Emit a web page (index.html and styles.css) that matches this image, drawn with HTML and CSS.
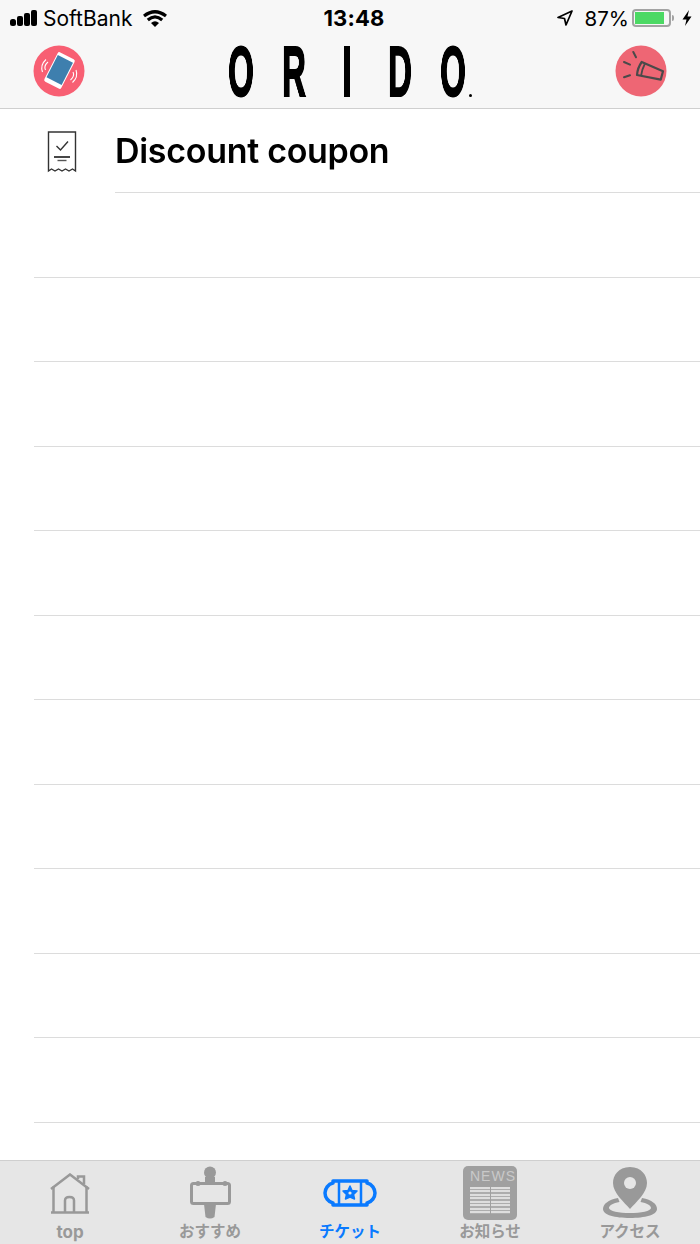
FILE: index.html
```html
<!DOCTYPE html>
<html lang="en">
<head>
    <meta charset="UTF-8">
    <title>ORIDO</title>
    <link rel="stylesheet" href="styles.css">
</head>
<body>
<div class="page">
    <div class="header">
        <div class="status">
            <div class="status-left">
                <svg class="signal" width="27" height="16" viewBox="0 0 27 16"><rect x="0" y="9" width="6" height="7" rx="2.500"/><rect x="7" y="6" width="6" height="10" rx="2"/><rect x="14" y="3" width="6" height="13" rx="2"/><rect x="21" y="0" width="6" height="16" rx="2"/></svg>
                <span>SoftBank</span>
                <svg class="wifi" width="24" height="17" viewBox="0 0 24 17"><path d="M1 6 Q12 -2.500 23 6" fill="none" stroke="#000" stroke-width="3.200"/><path d="M4.800 10 Q12 3.800 19.200 10" fill="none" stroke="#000" stroke-width="3.200"/><path d="M8 13 Q12 9.500 16 13 L12 17 Z"/></svg>
            </div>
            <div class="status-time">13:48</div>
            <div class="status-right">
                <svg width="16" height="16" viewBox="0 0 16 16"><path d="M15 1 L1 7.500 L7.500 8.500 L9 15 Z" fill="none" stroke="#000" stroke-width="1.700" stroke-linejoin="round"/></svg>
                <span class="percent">87%</span>
                <div class="battery"><div class="battery-fill"></div></div>
                <svg class="bolt" width="10" height="16" viewBox="0 0 10 16"><path d="M7 0 L0.500 9.500 L4.500 9.500 L3 16 L9.500 6.500 L5.500 6.500 Z"/></svg>
            </div>
        </div>
        <div class="nav">
            <svg class="nav-icon" width="52" height="52" viewBox="0 0 52 52">
                <circle cx="26" cy="26" r="25.500" fill="#f85f73"/>
                <g transform="rotate(27 26.500 25.500)">
                    <rect x="17" y="9" width="19" height="33" rx="2" fill="#fff"/>
                    <rect x="18" y="12.500" width="17" height="25" fill="#3e7fae"/>
                </g>
                <path d="M9.500 27 Q7 20 13 14.500 M12.500 25 Q10.500 21 15 17" fill="none" stroke="#fff" stroke-width="1.100"/>
                <path d="M43 25 Q45.500 32 39.500 37.500 M40 27 Q42 31 37.500 35" fill="none" stroke="#fff" stroke-width="1.100"/>
            </svg>
            <div class="logo"><span>O</span><span>R</span><span>I</span><span>D</span><span>O</span><i class="logo-dot"></i></div>
            <svg class="nav-icon" width="52" height="52" viewBox="0 0 52 52">
                <circle cx="26" cy="26" r="25.500" fill="#ee6674"/>
                <path d="M26.700 17 L48 26.300 L45.700 34.700 L22 30 Q22.500 23 26.700 17 Z" fill="none" stroke="#4a4a4a" stroke-width="2.200" stroke-linejoin="round"/>
                <path d="M30 18.500 Q27 24 26 31" fill="none" stroke="#4a4a4a" stroke-width="1.800"/>
                <path d="M18.300 7 L21 12.300 M9 17 L15 19.700 M9 32.300 L15 30.300" fill="none" stroke="#4a4a4a" stroke-width="2" stroke-linecap="round"/>
            </svg>
        </div>
    </div>
    <div class="list">
        <div class="row row-first">
            <svg class="row-icon" width="30" height="42" viewBox="0 0 30 42">
                <path d="M1.500 40 V1 H28.500 V40 L25.500 38 L22 40 L18.500 38 L15 40 L11.500 38 L8 40 L4.500 38 Z" fill="none" stroke="#333" stroke-width="1.400"/>
                <path d="M9.500 15 L13.500 19 L21 10.500" fill="none" stroke="#333" stroke-width="1.400"/>
                <path d="M7 26 H23" stroke="#333" stroke-width="1.800"/>
                <path d="M10.500 29.500 H19.500" stroke="#555" stroke-width="1.400"/>
            </svg>
            <div class="row-title">Discount coupon</div>
        </div>
        <div class="row"></div>
        <div class="row"></div>
        <div class="row"></div>
        <div class="row"></div>
        <div class="row"></div>
        <div class="row"></div>
        <div class="row"></div>
        <div class="row"></div>
        <div class="row"></div>
        <div class="row"></div>
        <div class="row"></div>
    </div>
    <div class="tabs">
        <div class="tab">
            <svg class="tab-home" width="42" height="42" viewBox="0 0 42 42" fill="none" stroke="#999" stroke-width="2.500"><path d="M2 16 L21 1.500 L40 16"/><path d="M29 6 V3.500 H35 V11"/><path d="M4.500 13.500 V39 M37.500 13.500 V39 M2 39.500 H40" /><path d="M16 39 V27.500 Q16 24 20.500 24 Q25 24 25 27.500 V39"/></svg>
            <span class="tab-label">top</span>
        </div>
        <div class="tab">
            <svg class="tab-sign" width="44" height="54" viewBox="0 0 44 54"><circle cx="22" cy="6.500" r="6" fill="#999"/><path d="M17 11 H27 V18 H17 Z M16 38 H28 L26.500 51 Q22 54 17.500 51 Z" fill="#999"/><circle cx="10" cy="17.500" r="2.500" fill="#999"/><circle cx="37" cy="17.500" r="2.500" fill="#999"/><rect x="3.500" y="17.500" width="38" height="20" rx="2" fill="none" stroke="#999" stroke-width="3"/></svg>
            <span class="tab-label">おすすめ</span>
        </div>
        <div class="tab tab-active">
            <svg class="tab-ticket" width="54" height="28" viewBox="0 0 54 28" fill="none" stroke="#0a7aff" stroke-width="3.500"><path d="M10 2 H44 V4 C49 5 52 10 52 14 C52 18 49 23 44 24 V26 H10 V24 C5 23 2 18 2 14 C2 10 5 5 10 4 Z" stroke-linejoin="round"/><path d="M16 3 V25 M38 3 V25" stroke-width="2.500"/><path d="M27 7 L29 11.500 L34 12 L30.500 15.500 L31.500 20 L27 18 L22.500 20 L23.500 15.500 L20 12 L25 11.500 Z" fill="#0a7aff" stroke="#0a7aff" stroke-width="1.500" stroke-linejoin="round"/><circle cx="27" cy="14" r="1.600" fill="#e6e6e6" stroke="none"/></svg>
            <span class="tab-label">チケット</span>
        </div>
        <div class="tab">
            <div class="news">
                <span class="news-title">NEWS</span>
                <div class="news-paper"><div class="news-page"></div><div class="news-page"></div></div>
            </div>
            <span class="tab-label">お知らせ</span>
        </div>
        <div class="tab">
            <svg width="56" height="54" viewBox="0 0 56 54"><path d="M16 32 C6 34 1 38 1 43 C1 49 13 52 28 52 C43 52 55 49 55 43 C55 38 50 34 40 32 L38.500 36 C45 37 49 39.500 49 42 C49 45 39 47 28 47 C17 47 7 45 7 42 C7 39.500 11 37 17.500 36 Z" fill="#999"/><path d="M28 1 C16 1 11 10 11 17 C11 27 22 36 28 43 C34 36 45 27 45 17 C45 10 40 1 28 1 Z" fill="#999"/><circle cx="28" cy="17" r="6" fill="#e6e6e6"/></svg>
            <span class="tab-label">アクセス</span>
        </div>
    </div>
</div>
</body>
</html>
```

FILE: styles.css
```css
*{
    margin:0;
    padding:0;
    box-sizing: border-box;
}
html,body{
    width: 100%;
    height: 100%;
    overflow: hidden;
    font-family: Inter, "Noto Sans CJK JP", sans-serif;
    color: #000;
}
.page{
    height: 100%;
    display: flex;
    flex-direction: column;
}
.header{
    height: 109px;
    flex: none;
    background: #f7f7f7;
    border-bottom: 1px solid #cfcfcf;
}
.status{
    height: 36px;
    display: grid;
    grid-template-columns: 1fr auto 1fr;
    align-items: center;
    padding: 0 8px 0 10px;
    font-size: 21px;
}
.status-left{
    display: flex;
    align-items: center;
    gap: 6px;
}
.wifi{
    margin-left: 5px;
}
.status-time{
    margin-left: 6px;
    font-weight: 700;
    font-size: 22px;
    letter-spacing: .2px;
}
.status-right{
    display: flex;
    align-items: center;
    justify-content: flex-end;
}
.percent{
    margin: 0 3px 0 12px;
    font-size: 20.500px;
}
.battery{
    position: relative;
    width: 39px;
    height: 18px;
    border: 2px solid #a3a3a3;
    border-radius: 4px;
    padding: 1px;
}
.battery:after{
    content: "";
    position: absolute;
    right: -4.500px;
    top: 4px;
    width: 2px;
    height: 6px;
    background: #a3a3a3;
    border-radius: 0 2px 2px 0;
}
.battery-fill{
    width: 87%;
    height: 100%;
    background: #4cd964;
}
.bolt{
    margin-left: 11px;
}
.nav{
    height: 72px;
    display: flex;
    align-items: flex-start;
    justify-content: space-between;
    padding: 9px 33px 0 33px;
}
.logo{
    width: 244px;
    height: 54px;
    display: flex;
    justify-content: space-between;
    align-items: center;
    position: relative;
    font-family: "Liberation Sans", sans-serif;
    font-weight: 700;
    font-size: 70px;
    line-height: 54px;
    padding-right: 6px;
    -webkit-text-stroke: 2px #000;
}
.logo span{
    display: flex;
    justify-content: center;
    width: 26px;
    transform: scaleX(.47);
    will-change: transform;
}
.logo-dot{
    position: absolute;
    right: 0;
    bottom: 2px;
    width: 3px;
    height: 3px;
    border-radius: 50%;
    background: #000;
}
.list{
    flex: 1;
    overflow: hidden;
    background: #fff;
}
.row{
    height: 84.500px;
    margin-left: 34px;
    border-bottom: 1px solid #dcdcdc;
}
.row-first{
    height: 84px;
    margin-left: 0;
    padding-left: 115px;
    position: relative;
    border: 0;
}
.row-icon{
    position: absolute;
    left: 47px;
    top: 22px;
}
.row-title{
    height: 100%;
    border-bottom: 1px solid #dcdcdc;
    font-size: 34px;
    font-weight: 600;
    line-height: 83px;
    letter-spacing: -.3px;
}
.tabs{
    height: 84px;
    flex: none;
    display: grid;
    grid-template-columns: repeat(5, 1fr);
    background: #e6e6e6;
    border-top: 1px solid #cfcfcf;
}
.tab{
    position: relative;
    display: flex;
    flex-direction: column;
    align-items: center;
    justify-content: flex-end;
    padding-bottom: 2px;
    color: #999;
}
.tab svg,.news{
    position: absolute;
    left: 50%;
    transform: translateX(-50%);
    top: 5px;
}
.tab .tab-home{
    top: 12px;
}
.tab .tab-ticket{
    top: 18px;
}
.tab-label{
    font-size: 15.500px;
    font-weight: 700;
    line-height: 20px;
}
.tab:first-child .tab-label{
    font-size: 17px;
}
.tab-active{
    color: #0a7aff;
}
.news{
    width: 54px;
    height: 54px;
    background: #a0a0a0;
    border-radius: 5px;
    padding: 2px 7px;
    overflow: hidden;
}
.news-title{
    display: block;
    color: #c9c9c9;
    font-family: "Liberation Sans", sans-serif;
    font-size: 14px;
    line-height: 17px;
    letter-spacing: 1px;
    text-align: center;
    white-space: nowrap;
}
.news-paper{
    display: flex;
    gap: 1px;
    margin-top: 2px;
}
.news-page{
    flex: 1;
    height: 27px;
    background: repeating-linear-gradient(#dedede 0 2px, #adadad 2px 3.500px);
}
```
